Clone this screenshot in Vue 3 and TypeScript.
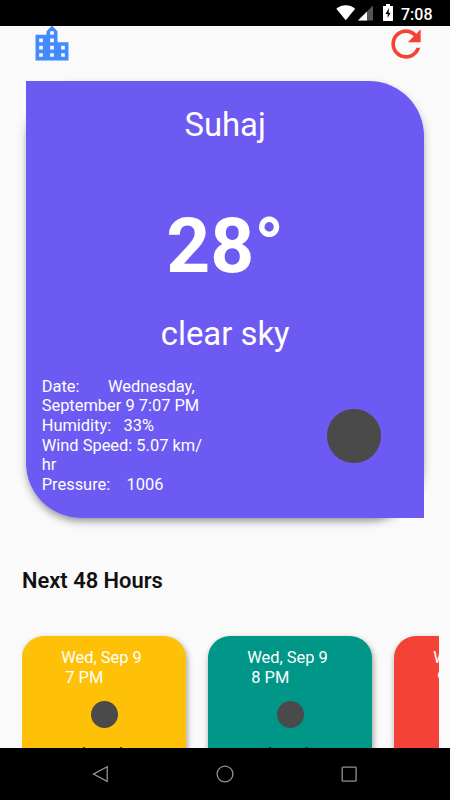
<script setup lang="ts">
interface Hour {
  date: string
  time: string
  sky: string
  tone: string
}

const city = 'Suhaj'
const temperature = '28°'
const sky = 'clear sky'

const details: string[] = [
  'Date:       Wednesday,',
  'September 9 7:07 PM',
  'Humidity:   33%',
  'Wind Speed: 5.07 km/',
  'hr',
  'Pressure:    1006',
]

const hours: Hour[] = [
  { date: 'Wed, Sep 9', time: ' 7 PM', sky: 'clear sky', tone: 'amber' },
  { date: 'Wed, Sep 9', time: ' 8 PM', sky: 'clear sky', tone: 'teal' },
  { date: 'Wed, Sep 9', time: ' 9 PM', sky: 'clear sky', tone: 'red' },
]
</script>

<template>
  <div class="screen">
    <div class="status-bar">
      <svg class="wifi" width="20" height="16" viewBox="0 0 20 16">
        <path d="M.3 3.8C6-.8 13.500-.8 19.200 3.800L9.750 15.300Z" fill="#fff" />
      </svg>
      <svg class="signal" width="16" height="16" viewBox="0 0 16 16">
        <path d="M0 15.500 15 .5V15.500Z" fill="#555" />
        <path d="M0 15.500 9 6.500V15.500Z" fill="#fff" />
      </svg>
      <svg class="battery" width="10" height="17" viewBox="0 0 10 17">
        <path d="M3 0h4v2h3v15H0V2h3Z" fill="#fff" />
        <path d="M6 4 2.500 10h2.200V14L7.500 8.700H5.600Z" fill="#000" />
      </svg>
      <span class="clock">7:08</span>
    </div>

    <main class="content">
      <header class="toolbar">
        <svg class="city-icon" viewBox="0 0 24 24">
          <path d="M15 11V5l-3-3-3 3v2H3v14h18V11h-6zm-8 8H5v-2h2v2zm0-4H5v-2h2v2zm0-4H5V9h2v2zm6 8h-2v-2h2v2zm0-4h-2v-2h2v2zm0-4h-2V9h2v2zm0-4h-2V5h2v2zm6 12h-2v-2h2v2zm0-4h-2v-2h2v2z" />
        </svg>
        <svg class="refresh-icon" viewBox="0 0 24 24">
          <path d="M17.650 6.350C16.200 4.900 14.210 4 12 4c-4.420 0-7.990 3.580-7.990 8s3.570 8 7.990 8c3.730 0 6.840-2.550 7.730-6h-2.080c-.82 2.330-3.040 4-5.650 4-3.310 0-6-2.690-6-6s2.690-6 6-6c1.660 0 3.140.69 4.220 1.780L13 11h7V4l-2.350 2.350z" />
        </svg>
      </header>

      <section class="current">
        <div class="current-body">
          <div class="city">{{ city }}</div>
          <div class="temperature">{{ temperature }}</div>
          <div class="sky">{{ sky }}</div>
          <div class="summary">
            <div class="details">
              <div v-for="line in details" :key="line">{{ line }}</div>
            </div>
            <div class="moon"></div>
          </div>
        </div>
      </section>

      <h2 class="heading">Next 48 Hours</h2>

      <section class="hours">
        <article v-for="hour in hours" :key="hour.time" class="hour" :class="hour.tone">
          <div class="hour-label">
            <div>{{ hour.date }}</div>
            <div>{{ hour.time }}</div>
          </div>
          <div class="hour-moon"></div>
          <div class="hour-sky">{{ hour.sky }}</div>
        </article>
      </section>
    </main>

    <nav class="nav-bar">
      <svg width="18" height="18" viewBox="0 0 18 18">
        <path d="M15.200 1.800v14.600L1.500 9.100Z" />
      </svg>
      <svg width="18" height="18" viewBox="0 0 18 18">
        <circle cx="9" cy="9" r="7.900" />
      </svg>
      <svg width="18" height="18" viewBox="0 0 18 18">
        <rect x="2.200" y="2.200" width="13.900" height="13.900" rx="0.700" />
      </svg>
    </nav>
  </div>
</template>

<style>
body {
  margin: 0;
  overflow: hidden;
}
</style>

<style scoped>
.screen {
  width: 450px;
  height: 800px;
  display: flex;
  flex-direction: column;
  overflow: hidden;
  background: #fafafa;
  font-family: Roboto, sans-serif;
  color: #fff;
}

.status-bar {
  flex: none;
  height: 26px;
  box-sizing: border-box;
  padding-right: 17.500px;
  background: #000;
  display: flex;
  align-items: center;
  justify-content: flex-end;
}

.signal {
  margin-left: 2px;
}

.battery {
  margin-left: 9px;
  margin-top: -1px;
}

.clock {
  margin-left: 8px;
  font-size: 16px;
  font-weight: 500;
  line-height: 26px;
  padding-top: 3px;
}

.content {
  flex: 1;
  min-height: 0;
  overflow: hidden;
  display: flex;
  flex-direction: column;
}

.toolbar {
  flex: none;
  height: 55px;
  box-sizing: border-box;
  padding: 0 22px 0 30.400px;
  display: flex;
  justify-content: space-between;
}

.toolbar svg {
  width: 44px;
  height: 44px;
  margin-top: -4px;
}

.city-icon {
  fill: #448aff;
}

.refresh-icon {
  fill: #f44336;
}

.current {
  flex: none;
  width: 397.500px;
  height: 437px;
  margin-left: 26.400px;
  border-radius: 55px;
  box-shadow: 0 5px 6px -3px rgba(0, 0, 0, 0.2), 0 4px 9px rgba(0, 0, 0, 0.25);
}

.current-body {
  height: 100%;
  border-radius: 0 55px 0 55px;
  background: #6c5af2;
  overflow: hidden;
  text-align: center;
}

.city {
  padding-top: 25px;
  font-size: 32.850px;
  line-height: 39px;
}

.temperature {
  margin-top: 56px;
  font-size: 76.700px;
  font-weight: 700;
  line-height: 90px;
}

.sky {
  margin-top: 24px;
  font-size: 32.850px;
  line-height: 39px;
}

.summary {
  margin-top: 22.800px;
  padding: 0 43px 0 15.300px;
  display: flex;
  justify-content: space-between;
}

.details {
  text-align: left;
  white-space: pre;
  font-size: 16.430px;
  line-height: 19.650px;
}

.moon {
  width: 53.500px;
  height: 53.500px;
  margin-top: 32.500px;
  border-radius: 50%;
  background: #4a4a4a;
}

.heading {
  flex: none;
  margin: 49px 0 0 22px;
  font-size: 21.900px;
  font-weight: 600;
  line-height: 27px;
  color: #111;
}

.hours {
  flex: none;
  width: 417px;
  height: 155px;
  margin-left: 22px;
  padding-top: 41.600px;
  box-sizing: border-box;
  display: flex;
  gap: 22px;
  overflow: hidden;
}

.hour {
  flex: none;
  width: 164px;
  height: 190px;
  border-radius: 22px;
  display: flex;
  flex-direction: column;
  align-items: center;
  box-shadow: 1px 3px 6px rgba(0, 0, 0, 0.4);
}

.amber {
  background: #ffc107;
}

.teal {
  background: #009688;
}

.red {
  background: #f44336;
}

.hour-label {
  margin-top: 12.400px;
  margin-left: -5px;
  white-space: pre;
  font-size: 16.430px;
  line-height: 19.700px;
}

.hour-moon {
  width: 27px;
  height: 27px;
  margin-top: 14px;
  border-radius: 50%;
  background: #4a4a4a;
}

.hour-sky {
  margin-top: 14.500px;
  font-size: 15.330px;
  line-height: 20px;
  color: #111;
}

.nav-bar {
  flex: none;
  height: 52px;
  background: #000;
  display: flex;
  justify-content: center;
  align-items: center;
  gap: 106px;
}

.nav-bar svg {
  fill: none;
  stroke: #929292;
  stroke-width: 1.300;
}
</style>
